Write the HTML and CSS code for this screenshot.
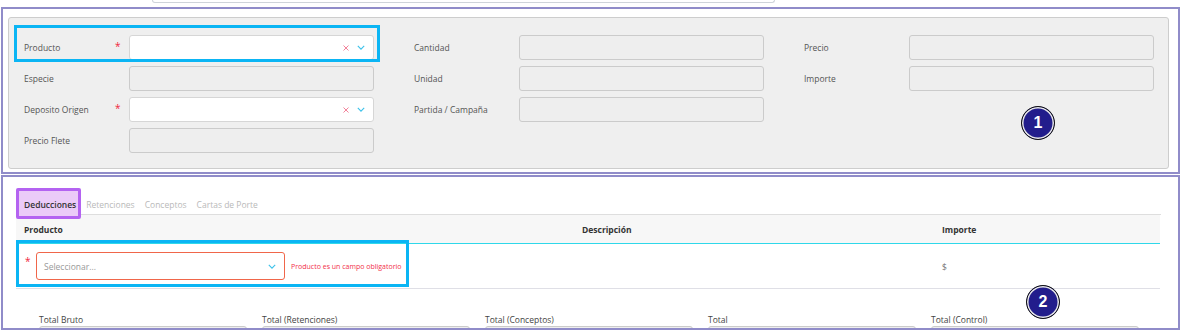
FILE: index.html
```html
<!DOCTYPE html>
<html>
<head>
    <title>Detalle de liquidación</title>
    <link rel="stylesheet" href="styles.css">
</head>
<body>
    <div class="searchbar"></div>

    <!-- Cabecera del producto -->
    <section class="block block-head">
        <div class="panel">
            <div class="col">
                <div class="field">
                    <label>Producto</label><span class="req">*</span>
                    <div class="select">
                        <svg class="clear" viewBox="0 0 6 6"><path d="M0.5 0.5l5 5M5.5 0.5l-5 5"/></svg>
                        <svg class="chev" viewBox="0 0 10 6"><path d="M1 1l4 4 4-4"/></svg>
                    </div>
                </div>
                <div class="field">
                    <label>Especie</label><span></span>
                    <div class="input"></div>
                </div>
                <div class="field">
                    <label>Deposito Origen</label><span class="req">*</span>
                    <div class="select">
                        <svg class="clear" viewBox="0 0 6 6"><path d="M0.5 0.5l5 5M5.5 0.5l-5 5"/></svg>
                        <svg class="chev" viewBox="0 0 10 6"><path d="M1 1l4 4 4-4"/></svg>
                    </div>
                </div>
                <div class="field">
                    <label>Precio Flete</label><span></span>
                    <div class="input"></div>
                </div>
            </div>
            <div class="col">
                <div class="field"><label>Cantidad</label><span></span><div class="input"></div></div>
                <div class="field"><label>Unidad</label><span></span><div class="input"></div></div>
                <div class="field"><label>Partida / Campaña</label><span></span><div class="input"></div></div>
            </div>
            <div class="col">
                <div class="field"><label>Precio</label><span></span><div class="input"></div></div>
                <div class="field"><label>Importe</label><span></span><div class="input"></div></div>
            </div>
        </div>
        <span class="mark-blue mark-head"></span>
        <span class="badge badge-1">1</span>
    </section>

    <!-- Deducciones / retenciones -->
    <section class="block block-detail">
        <div class="tabs">
            <span class="tab active">Deducciones</span>
            <span class="tab">Retenciones</span>
            <span class="tab">Conceptos</span>
            <span class="tab">Cartas de Porte</span>
        </div>
        <table class="grid">
            <thead>
                <tr>
                    <th class="c-prod">Producto</th>
                    <th class="c-desc">Descripción</th>
                    <th class="c-imp">Importe</th>
                </tr>
            </thead>
            <tbody>
                <tr>
                    <td class="c-prod">
                        <div class="row-prod">
                            <span class="req">*</span>
                            <div class="select invalid">
                                <span class="placeholder">Seleccionar...</span>
                                <svg class="chev" viewBox="0 0 10 6"><path d="M1 1l4 4 4-4"/></svg>
                            </div>
                            <span class="error">Producto es un campo obligatorio</span>
                        </div>
                    </td>
                    <td class="c-desc"></td>
                    <td class="c-imp">$</td>
                </tr>
            </tbody>
        </table>
        <div class="totals">
            <div class="total"><label>Total Bruto</label><div class="input"></div></div>
            <div class="total"><label>Total (Retenciones)</label><div class="input"></div></div>
            <div class="total"><label>Total (Conceptos)</label><div class="input"></div></div>
            <div class="total"><label>Total</label><div class="input"></div></div>
            <div class="total"><label>Total (Control)</label><div class="input"></div></div>
        </div>
        <span class="mark-blue mark-row"></span>
        <span class="badge badge-2">2</span>
    </section>
</body>
</html>
```

FILE: styles.css
```css
body {
    margin: 0;
    background: #fff;
    font-family: 'Open Sans', 'Liberation Sans', sans-serif;
    color: #555;
    overflow: hidden;
}

/* barra de búsqueda superior (recortada) */
.searchbar {
    margin-left: 152px;
    width: 621px;
    height: 2px;
    border: 1px solid #cfd4da;
    border-top: none;
    border-radius: 0 0 4px 4px;
}

/* bloques marcados */
.block {
    position: relative;
    width: 1179px;
    margin-left: 1px;
    box-sizing: border-box;
}
.block-head {
    margin-top: 4px;
    border: 2px solid #908cc9;
    padding: 8px 9px 3px 5px;
}
.block-detail {
    margin-top: 1px;
    height: 155px;
    padding: 2px 19px 0 15px;
}
.block-detail::after {
    content: '';
    position: absolute;
    inset: 0;
    border: 2px solid #908cc9;
    pointer-events: none;
    z-index: 3;
}

/* panel gris */
.panel {
    display: grid;
    grid-template-columns: repeat(3, 350px);
    column-gap: 40px;
    align-items: start;
    background: #efefef;
    border: 1px solid #cdcdcd;
    border-radius: 3px;
    padding: 17px 15px 15px;
}
.col {
    display: flex;
    flex-direction: column;
    gap: 6px;
}
.field {
    display: grid;
    grid-template-columns: 91px 14px 245px;
    align-items: center;
    height: 25px;
}
.field label {
    font-size: 8.5px;
    color: #555;
}
.req {
    color: #f0243c;
    font-size: 10px;
    line-height: 1;
    position: relative;
    top: -2px;
}
.input {
    height: 25px;
    box-sizing: border-box;
    background: #eeeeee;
    border: 1px solid #cbcbcb;
    border-radius: 3px;
}
.select {
    height: 25px;
    box-sizing: border-box;
    background: #fff;
    border: 1px solid #d6d6d6;
    border-radius: 3px;
    display: flex;
    align-items: center;
    justify-content: flex-end;
    gap: 8px;
    padding: 0 8px;
}
.clear {
    width: 6px;
    height: 6px;
    fill: none;
    stroke: #f3829a;
    stroke-width: 1;
}
.chev {
    width: 8px;
    height: 5px;
    fill: none;
    stroke: #3cc2ea;
    stroke-width: 1.4;
}

/* pestañas */
.tabs {
    display: flex;
    align-items: flex-end;
    height: 37px;
    padding-left: 3px;
    border-bottom: 1px solid #dedede;
}
.tab {
    font-size: 8.5px;
    color: #b9b9b9;
    padding: 0 5px 2px;
    line-height: 15px;
}
.tab.active {
    position: relative;
    z-index: 0;
    color: #333;
    font-weight: 600;
    border-bottom: 1px solid #e8384f;
    margin-bottom: -1px;
}
.tab.active::before {
    content: '';
    position: absolute;
    left: -3px;
    right: 0;
    top: -9px;
    bottom: -5px;
    background: #ebcbf8;
    border: 3px solid #b463f1;
    border-radius: 2px;
    z-index: -1;
}

/* tabla */
.grid {
    width: 1144px;
    border-collapse: collapse;
    font-size: 8.5px;
}
.grid th {
    background: #f7f7f7;
    color: #333;
    font-weight: 700;
    text-align: left;
    height: 28px;
    padding: 0 8px;
    border-bottom: 1px solid #2fd8ea;
}
.grid td {
    height: 44px;
    padding: 0 8px;
    border-bottom: 1px solid #dfdfe6;
    color: #777;
}
.c-prod { width: 542px; }
.c-desc { width: 344px; }
.row-prod {
    display: flex;
    align-items: center;
}
.row-prod .req {
    width: 12px;
    box-sizing: border-box;
    padding-left: 1px;
    top: -5px;
}
.select.invalid {
    width: 249px;
    height: 28px;
    border-color: #f0664a;
    justify-content: space-between;
    padding: 0 8px 0 7px;
}
.placeholder {
    color: #999;
    font-size: 8.5px;
}
.error {
    color: #f2304a;
    font-size: 7px;
    margin-left: 6px;
}

/* totales */
.totals {
    display: grid;
    grid-template-columns: repeat(5, 208px);
    column-gap: 15px;
    padding: 25px 0 0 23px;
}
.total label {
    display: block;
    font-size: 8.5px;
    color: #444;
    margin-bottom: 1px;
}

/* anotaciones */
.mark-blue {
    position: absolute;
    border: 3px solid #0bb5f4;
    pointer-events: none;
}
.mark-head { left: 11px; top: 16px; width: 366px; height: 37px; box-sizing: border-box; }
.mark-row { left: 15px; top: 65px; width: 393px; height: 47px; box-sizing: border-box; }

.badge {
    position: absolute;
    width: 34px;
    height: 34px;
    box-sizing: border-box;
    border-radius: 50%;
    background: #221d8c;
    border: 1.5px solid #111;
    box-shadow: inset 0 0 0 1.5px #e8e8e8;
    color: #fff;
    font-family: 'Liberation Sans', sans-serif;
    font-weight: 700;
    font-size: 16px;
    display: flex;
    align-items: center;
    justify-content: center;
    z-index: 4;
}
.badge-1 { left: 1018px; top: 97px; }
.badge-2 { left: 1025px; top: 110px; }
```
